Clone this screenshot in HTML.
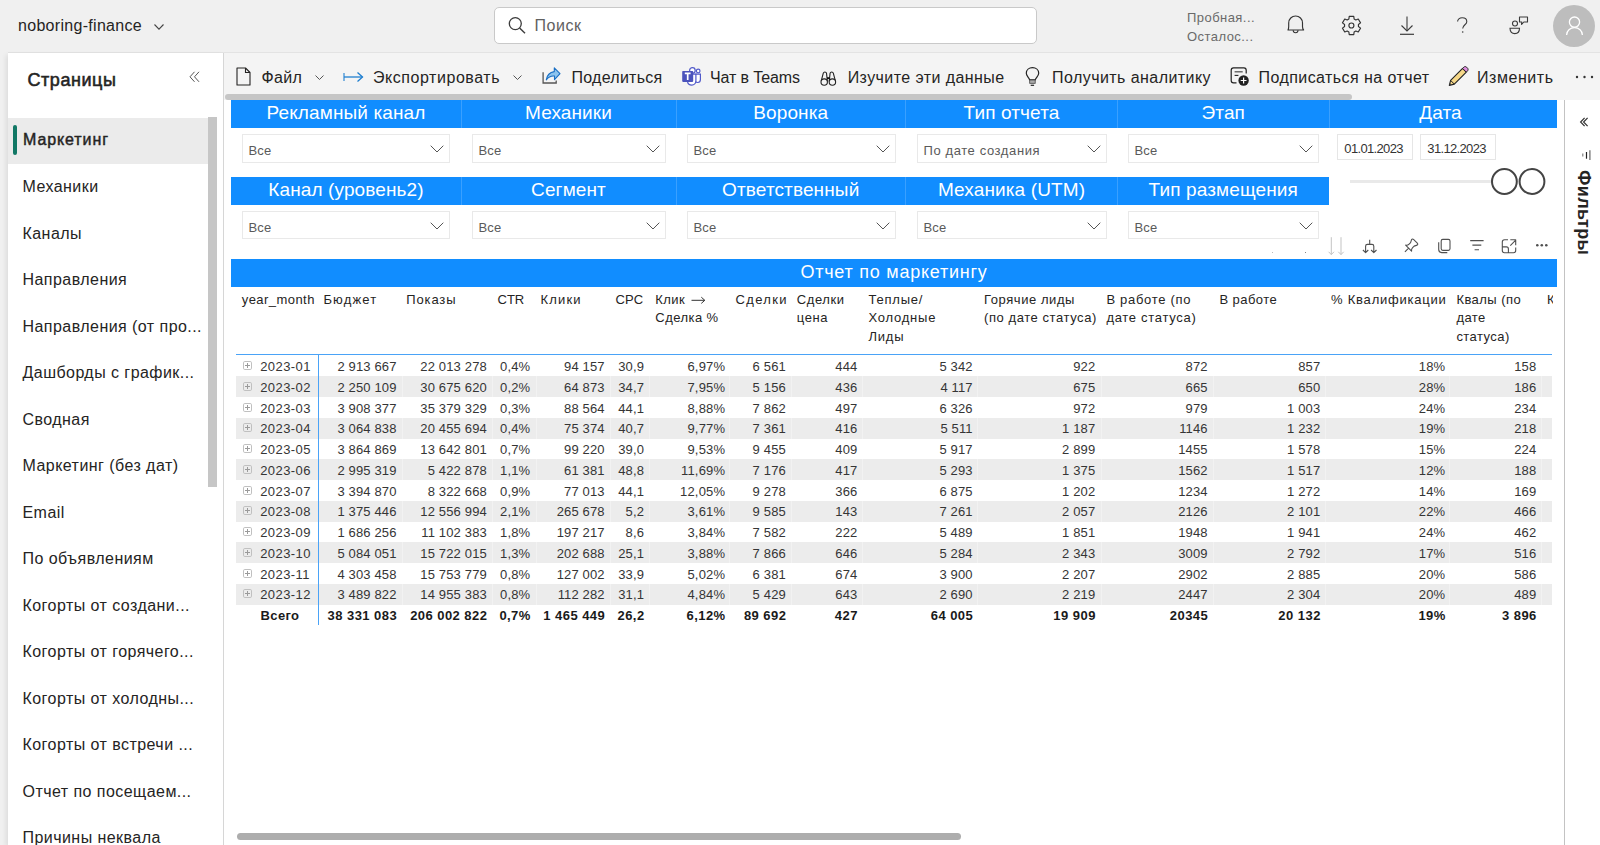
<!DOCTYPE html>
<html><head><meta charset="utf-8">
<style>
*{box-sizing:border-box;margin:0;padding:0}
html,body{width:1600px;height:845px;overflow:hidden;background:#f0f0f0;font-family:"Liberation Sans",sans-serif;color:#252423}
.a{position:absolute;white-space:nowrap}
svg.a{overflow:visible}
</style></head><body>
<div class="a" style="left:0.00px;top:0.00px;width:1600.00px;height:53.00px;background:#f0f0f0"></div><div class="a" style="left:8.00px;top:52.00px;width:1592.00px;height:1.20px;background:#e3e3e3"></div><div class="a" style="left:8.00px;top:53.30px;width:215.00px;height:792.00px;background:#fff;box-shadow:-2px 2px 5px rgba(0,0,0,.085)"></div><div class="a" style="left:223.00px;top:53.00px;width:1.00px;height:792.00px;background:#d6d6d6"></div><div class="a" style="left:224.00px;top:53.00px;width:1376.00px;height:47.00px;background:#f4f4f4"></div><div class="a" style="left:224.00px;top:100.00px;width:1340.00px;height:745.00px;background:#fff"></div><div class="a" style="left:1564.00px;top:100.00px;width:36.00px;height:745.00px;background:#fff"></div><div class="a" style="left:1564.00px;top:100.00px;width:1.00px;height:745.00px;background:#c3c3c3"></div><div class="a" style="left:18.00px;top:18.46px;font-size:16px;line-height:16px;color:#252423;font-weight:400;letter-spacing:0.3px;">noboring-finance</div><svg class="a" style="left:154.00px;top:24.00px;" width="10" height="6" viewBox="0 0 10 6" fill="none"><path d="M0.5 0.5 L5 5.2 L9.5 0.5" stroke="#444" stroke-width="1.1"/></svg><div class="a" style="left:494.00px;top:7.00px;width:543.00px;height:37.00px;background:#fff;border:1px solid #c9c9c9;border-radius:5px"></div><svg class="a" style="left:508.00px;top:16.00px;" width="18" height="18" viewBox="0 0 18 18" fill="none"><circle cx="7.3" cy="7.6" r="6" stroke="#3b3b3b" stroke-width="1.3"/><path d="M11.6 12 L17 17.3" stroke="#3b3b3b" stroke-width="1.4"/></svg><div class="a" style="left:534.40px;top:18.36px;font-size:16px;line-height:16px;color:#616161;font-weight:400;letter-spacing:0.55px;">Поиск</div><div class="a" style="left:1187.00px;top:10.90px;font-size:13px;line-height:13px;color:#6a6a6a;font-weight:400;letter-spacing:0.45px;">Пробная...</div><div class="a" style="left:1187.00px;top:29.60px;font-size:13px;line-height:13px;color:#6a6a6a;font-weight:400;letter-spacing:0.45px;">Осталос...</div><svg class="a" style="left:1280.00px;top:10.00px;" width="90" height="32" viewBox="0 0 90 32" fill="none"><path d="M8 20 H23.6 C22.7 19 22.5 18 22.5 16.5 V12.9 A6.9 6.9 0 0 0 8.7 12.9 V16.5 C8.7 18 8.5 19 8 20 Z" stroke="#333" stroke-width="1.15" stroke-linejoin="round"/><path d="M13.2 20.3 A2.4 2.4 0 0 0 18 20.3" stroke="#333" stroke-width="1.1"/><path d="M68.88 9.01 L69.23 6.38 L73.77 6.38 L74.12 9.01 L75.81 9.98 L78.26 8.97 L80.54 12.91 L78.43 14.53 L78.43 16.47 L80.54 18.09 L78.26 22.03 L75.81 21.02 L74.12 21.99 L73.77 24.62 L69.23 24.62 L68.88 21.99 L67.19 21.02 L64.74 22.03 L62.46 18.09 L64.57 16.47 L64.57 14.53 L62.46 12.91 L64.74 8.97 L67.19 9.98 Z" stroke="#333" stroke-width="1.15" stroke-linejoin="round"/><circle cx="71.4" cy="15.5" r="2.5" stroke="#333" stroke-width="1.15"/></svg><svg class="a" style="left:1399.00px;top:16.00px;" width="16" height="19" viewBox="0 0 16 19" fill="none"><path d="M8 0.5 V15" stroke="#3b3b3b" stroke-width="1.1"/><path d="M2.5 9.5 L8 15 L13.5 9.5" stroke="#3b3b3b" stroke-width="1.1"/><path d="M1 18.3 H15" stroke="#3b3b3b" stroke-width="1.2"/></svg><svg class="a" style="left:1456.00px;top:17.00px;" width="13" height="17" viewBox="0 0 13 17" fill="none"><path d="M1.6 4.6 C1.6 2.3 3.5 0.8 6.2 0.8 C8.9 0.8 10.8 2.4 10.8 4.7 C10.8 7.6 6.7 8 6.7 11.5" stroke="#3b3b3b" stroke-width="1.1" fill="none"/><circle cx="6.7" cy="15" r="0.8" fill="#3b3b3b"/></svg><svg class="a" style="left:1509.00px;top:16.00px;" width="20" height="19" viewBox="0 0 20 19" fill="none"><circle cx="6" cy="7.5" r="2.5" stroke="#3b3b3b" stroke-width="1.1"/><path d="M1 12.3 H10.5 C10.5 16 8.6 17.6 5.8 17.6 C3 17.6 1 16 1 12.3 Z" stroke="#3b3b3b" stroke-width="1.1"/><path d="M10.5 1 H18.5 V6 H14.8 L12.6 8.5 L12.8 6 H10.5 Z" stroke="#3b3b3b" stroke-width="1.1" stroke-linejoin="round"/></svg><div class="a" style="left:1553.20px;top:4.50px;width:42.00px;height:42.00px;background:#bdbdbd;border-radius:50%"></div><svg class="a" style="left:1561.00px;top:14.00px;" width="26" height="22" viewBox="0 0 26 22" fill="none"><circle cx="13.5" cy="8.1" r="5.1" stroke="#fff" stroke-width="1.3"/><path d="M5.6 21 C5.6 16.6 9.2 13.6 13.5 13.6 C17.8 13.6 21.4 16.6 21.4 21" stroke="#fff" stroke-width="1.3"/></svg><div class="a" style="left:27.50px;top:71.46px;font-size:18px;line-height:18px;color:#252423;font-weight:400;letter-spacing:0.55px;-webkit-text-stroke:0.55px #252423">Страницы</div><svg class="a" style="left:189.00px;top:71.00px;" width="11" height="12" viewBox="0 0 11 12" fill="none"><path d="M5.5 0.8 L1 5.8 L5.5 10.8 M10 0.8 L5.5 5.8 L10 10.8" stroke="#555" stroke-width="1"/></svg><div class="a" style="left:8.00px;top:117.50px;width:200.00px;height:46.20px;background:#ebebeb"></div><div class="a" style="left:12.80px;top:124.60px;width:4.40px;height:30.00px;background:#117865;border-radius:2.2px"></div><div class="a" style="left:208.00px;top:117.00px;width:9.00px;height:370.00px;background:#c6c6c6"></div><div class="a" style="left:23.00px;top:132.26px;font-size:16px;line-height:16px;color:#252423;font-weight:400;letter-spacing:0.9px;-webkit-text-stroke:0.45px #252423">Маркетинг</div><div class="a" style="left:22.50px;top:179.06px;font-size:16px;line-height:16px;color:#252423;font-weight:400;letter-spacing:0.45px;">Механики</div><div class="a" style="left:22.50px;top:225.56px;font-size:16px;line-height:16px;color:#252423;font-weight:400;letter-spacing:0.45px;">Каналы</div><div class="a" style="left:22.50px;top:272.06px;font-size:16px;line-height:16px;color:#252423;font-weight:400;letter-spacing:0.45px;">Направления</div><div class="a" style="left:22.50px;top:318.56px;font-size:16px;line-height:16px;color:#252423;font-weight:400;letter-spacing:0.45px;">Направления (от про...</div><div class="a" style="left:22.50px;top:365.06px;font-size:16px;line-height:16px;color:#252423;font-weight:400;letter-spacing:0.45px;">Дашборды с график...</div><div class="a" style="left:22.50px;top:411.56px;font-size:16px;line-height:16px;color:#252423;font-weight:400;letter-spacing:0.45px;">Сводная</div><div class="a" style="left:22.50px;top:458.06px;font-size:16px;line-height:16px;color:#252423;font-weight:400;letter-spacing:0.45px;">Маркетинг (без дат)</div><div class="a" style="left:22.50px;top:504.56px;font-size:16px;line-height:16px;color:#252423;font-weight:400;letter-spacing:0.45px;">Email</div><div class="a" style="left:22.50px;top:551.06px;font-size:16px;line-height:16px;color:#252423;font-weight:400;letter-spacing:0.45px;">По объявлениям</div><div class="a" style="left:22.50px;top:597.56px;font-size:16px;line-height:16px;color:#252423;font-weight:400;letter-spacing:0.45px;">Когорты от создани...</div><div class="a" style="left:22.50px;top:644.06px;font-size:16px;line-height:16px;color:#252423;font-weight:400;letter-spacing:0.45px;">Когорты от горячего...</div><div class="a" style="left:22.50px;top:690.56px;font-size:16px;line-height:16px;color:#252423;font-weight:400;letter-spacing:0.45px;">Когорты от холодны...</div><div class="a" style="left:22.50px;top:737.06px;font-size:16px;line-height:16px;color:#252423;font-weight:400;letter-spacing:0.45px;">Когорты от встречи ...</div><div class="a" style="left:22.50px;top:783.56px;font-size:16px;line-height:16px;color:#252423;font-weight:400;letter-spacing:0.45px;">Отчет по посещаем...</div><div class="a" style="left:22.50px;top:830.06px;font-size:16px;line-height:16px;color:#252423;font-weight:400;letter-spacing:0.45px;">Причины неквала</div><svg class="a" style="left:236.00px;top:67.00px;" width="15" height="19" viewBox="0 0 15 19" fill="none"><path d="M1 1 H9.5 L14 5.5 V18 H1 Z" stroke="#252423" stroke-width="1.1" stroke-linejoin="round"/><path d="M9.5 1 V5.5 H14" stroke="#252423" stroke-width="1.1"/></svg><div class="a" style="left:261.50px;top:69.56px;font-size:16px;line-height:16px;color:#252423;font-weight:400;letter-spacing:0.3px;">Файл</div><svg class="a" style="left:314.50px;top:74.50px;" width="9" height="5" viewBox="0 0 9 5" fill="none"><path d="M0.5 0.5 L4.5 4.5 L8.5 0.5" stroke="#555" stroke-width="1"/></svg><svg class="a" style="left:343.00px;top:71.00px;" width="21" height="12" viewBox="0 0 21 12" fill="none"><path d="M1 2 V10" stroke="#1f7fd0" stroke-width="1.1"/><path d="M1 6 H19.5" stroke="#1f7fd0" stroke-width="1.3"/><path d="M14.5 1.5 L19.5 6 L14.5 10.5" stroke="#1f7fd0" stroke-width="1.3"/></svg><div class="a" style="left:373.00px;top:69.56px;font-size:16px;line-height:16px;color:#252423;font-weight:400;letter-spacing:0.55px;">Экспортировать</div><svg class="a" style="left:513.00px;top:74.50px;" width="9" height="5" viewBox="0 0 9 5" fill="none"><path d="M0.5 0.5 L4.5 4.5 L8.5 0.5" stroke="#555" stroke-width="1"/></svg><svg class="a" style="left:536.00px;top:62.00px;" width="30" height="30" viewBox="0 0 30 30" fill="none"><path d="M7.1 10.3 V21 H20.2 V18.5" stroke="#555" stroke-width="1.3"/><path d="M10.3 17.8 C11 13 14 10.2 18.3 9.6 V5.9 L24 11.7 L18.5 17.6 V14 C15 13.6 12.4 15 10.3 17.8 Z" fill="#8cc4ef" stroke="#1a6fc4" stroke-width="1.1" stroke-linejoin="round"/></svg><div class="a" style="left:571.50px;top:69.56px;font-size:16px;line-height:16px;color:#252423;font-weight:400;letter-spacing:0.26px;">Поделиться</div><svg class="a" style="left:676.00px;top:62.00px;" width="30" height="30" viewBox="0 0 30 30" fill="none"><path d="M19.6 12.2 H24.4 V17.6 C24.4 19.3 23.3 20.5 21.8 20.5 C20.6 20.5 19.8 19.9 19.5 19.3" stroke="#5059c9" stroke-width="1.2" fill="#fff"/><circle cx="22.2" cy="9" r="1.8" stroke="#5059c9" stroke-width="1.2" fill="#fff"/><path d="M12 12.2 H19.9 V18.6 C19.9 21.3 18 23.2 15.8 23.2 C13.6 23.2 11.9 21.7 11.6 19.9" stroke="#5059c9" stroke-width="1.2" fill="#fff"/><circle cx="16.4" cy="8.4" r="2.8" stroke="#5059c9" stroke-width="1.2" fill="#fff"/><rect x="6.2" y="8.9" width="11" height="11" rx="0.8" fill="#4b53bc"/><path d="M8.8 11.4 H14.6 M11.7 11.4 V17.9" stroke="#fff" stroke-width="1.7"/></svg><div class="a" style="left:710.00px;top:69.56px;font-size:16px;line-height:16px;color:#252423;font-weight:400;letter-spacing:-0.1px;">Чат в Teams</div><svg class="a" style="left:815.00px;top:62.00px;" width="30" height="30" viewBox="0 0 30 30" fill="none"><path d="M6.3 18.6 L8.3 11.2 C8.8 9.6 11 9.6 11.5 11.2 L12.4 19.6" stroke="#222" stroke-width="1.1" fill="none"/><circle cx="9.2" cy="20.1" r="3.2" stroke="#222" stroke-width="1.1" fill="#f4f4f4"/><path d="M20.3 18.6 L18.3 11.2 C17.8 9.6 15.6 9.6 15.1 11.2 L14.2 19.6" stroke="#222" stroke-width="1.1" fill="none"/><circle cx="17.4" cy="20.1" r="3.2" stroke="#222" stroke-width="1.1" fill="#f4f4f4"/><rect x="12" y="15.2" width="2.6" height="1.8" fill="#111"/></svg><div class="a" style="left:847.70px;top:69.56px;font-size:16px;line-height:16px;color:#252423;font-weight:400;letter-spacing:0.42px;">Изучите эти данные</div><svg class="a" style="left:1020.00px;top:62.00px;" width="30" height="30" viewBox="0 0 30 30" fill="none"><path d="M9.6 17.9 C9.3 16 6.3 14 6.3 11.3 C6.3 7.8 9.1 5.7 12.5 5.7 C15.9 5.7 18.7 7.8 18.7 11.3 C18.7 14 15.7 16 15.3 17.9 Z" stroke="#222" stroke-width="1.2" stroke-linejoin="round"/><rect x="9.7" y="18" width="5.5" height="3.3" fill="#aaa" stroke="#444" stroke-width=".8"/><path d="M10.7 23.3 H14.1" stroke="#222" stroke-width="1.2"/></svg><div class="a" style="left:1052.00px;top:69.56px;font-size:16px;line-height:16px;color:#252423;font-weight:400;letter-spacing:0.44px;">Получить аналитику</div><svg class="a" style="left:1225.00px;top:62.00px;" width="30" height="30" viewBox="0 0 30 30" fill="none"><path d="M11.5 20.9 H8.5 C7.2 20.9 6.2 19.9 6.2 18.6 V8.2 C6.2 6.9 7.2 5.9 8.5 5.9 H18.9 C20.2 5.9 21.2 6.9 21.2 8.2 V11.6" stroke="#222" stroke-width="1.2"/><path d="M9.6 9.8 H17.7" stroke="#555" stroke-width="1.3"/><path d="M9.6 13.4 H13.4" stroke="#222" stroke-width="1.1"/><circle cx="18.6" cy="18.5" r="5.2" fill="#222"/><path d="M18.6 15.6 V21.4 M15.7 18.5 H21.5" stroke="#fff" stroke-width="1.2"/></svg><div class="a" style="left:1258.50px;top:69.56px;font-size:16px;line-height:16px;color:#252423;font-weight:400;letter-spacing:0.43px;">Подписаться на отчет</div><svg class="a" style="left:1444.00px;top:62.00px;" width="30" height="30" viewBox="0 0 30 30" fill="none"><path d="M5.3 23.4 L6.6 18.4 L18.6 6.4 L22.3 10.1 L10.3 22.1 Z" fill="#f6d889" stroke="#222" stroke-width="1.1" stroke-linejoin="round"/><path d="M18.6 6.4 L19.8 5.2 C20.6 4.4 21.8 4.4 22.6 5.2 L23.5 6.1 C24.3 6.9 24.3 8.1 23.5 8.9 L22.3 10.1 Z" fill="#df8ee0" stroke="#222" stroke-width="1"/><path d="M6.6 18.4 L10.3 22.1" stroke="#222" stroke-width="1"/><path d="M5.3 23.4 L5.9 21 L7.7 22.8 Z" fill="#444"/></svg><div class="a" style="left:1477.00px;top:69.56px;font-size:16px;line-height:16px;color:#252423;font-weight:400;letter-spacing:0.55px;">Изменить</div><svg class="a" style="left:1575.00px;top:75.00px;" width="19" height="4" viewBox="0 0 19 4" fill="none"><circle cx="2" cy="2" r="1.2" fill="#333"/><circle cx="9.5" cy="2" r="1.2" fill="#333"/><circle cx="17" cy="2" r="1.2" fill="#333"/></svg><div class="a" style="left:225.00px;top:94.00px;width:1127.00px;height:6.00px;background:#c6c6c6;border-radius:3px"></div><div class="a" style="left:231.00px;top:100.00px;width:1326.00px;height:28.00px;background:#118dff"></div><div class="a" style="left:460.50px;top:100.00px;width:1.00px;height:28.00px;background:#3aa0ff"></div><div class="a" style="left:675.50px;top:100.00px;width:1.00px;height:28.00px;background:#3aa0ff"></div><div class="a" style="left:905.00px;top:100.00px;width:1.00px;height:28.00px;background:#3aa0ff"></div><div class="a" style="left:1117.00px;top:100.00px;width:1.00px;height:28.00px;background:#3aa0ff"></div><div class="a" style="left:1328.50px;top:100.00px;width:1.00px;height:28.00px;background:#3aa0ff"></div><div class="a" style="left:231px;top:100px;width:230px;height:28px;line-height:25px;text-align:center;color:#fff;font-size:19px;letter-spacing:0.12px">Рекламный канал</div><div class="a" style="left:461px;top:100px;width:215px;height:28px;line-height:25px;text-align:center;color:#fff;font-size:19px;letter-spacing:0.12px">Механики</div><div class="a" style="left:676px;top:100px;width:229.5px;height:28px;line-height:25px;text-align:center;color:#fff;font-size:19px;letter-spacing:0.12px">Воронка</div><div class="a" style="left:905.5px;top:100px;width:212.0px;height:28px;line-height:25px;text-align:center;color:#fff;font-size:19px;letter-spacing:0.12px">Тип отчета</div><div class="a" style="left:1117.5px;top:100px;width:211.5px;height:28px;line-height:25px;text-align:center;color:#fff;font-size:19px;letter-spacing:0.12px">Этап</div><div class="a" style="left:1326.5px;top:100px;width:228px;height:28px;line-height:25px;text-align:center;color:#fff;font-size:19px;letter-spacing:0.12px">Дата</div><div class="a" style="left:242.00px;top:134.00px;width:208.00px;height:28.50px;background:#fff;border:1px solid #e9e9e9"></div><div class="a" style="left:248.50px;top:144.30px;font-size:13px;line-height:13px;color:#5a5a5a;font-weight:400;letter-spacing:0.15px;">Все</div><svg class="a" style="left:430.00px;top:145.00px;" width="14" height="8" viewBox="0 0 14 8" fill="none"><path d="M0.7 0.7 L7 7 L13.3 0.7" stroke="#555" stroke-width="1"/></svg><div class="a" style="left:472.00px;top:134.00px;width:194.00px;height:28.50px;background:#fff;border:1px solid #e9e9e9"></div><div class="a" style="left:478.50px;top:144.30px;font-size:13px;line-height:13px;color:#5a5a5a;font-weight:400;letter-spacing:0.15px;">Все</div><svg class="a" style="left:646.00px;top:145.00px;" width="14" height="8" viewBox="0 0 14 8" fill="none"><path d="M0.7 0.7 L7 7 L13.3 0.7" stroke="#555" stroke-width="1"/></svg><div class="a" style="left:687.00px;top:134.00px;width:209.00px;height:28.50px;background:#fff;border:1px solid #e9e9e9"></div><div class="a" style="left:693.50px;top:144.30px;font-size:13px;line-height:13px;color:#5a5a5a;font-weight:400;letter-spacing:0.15px;">Все</div><svg class="a" style="left:876.00px;top:145.00px;" width="14" height="8" viewBox="0 0 14 8" fill="none"><path d="M0.7 0.7 L7 7 L13.3 0.7" stroke="#555" stroke-width="1"/></svg><div class="a" style="left:917.00px;top:134.00px;width:190.00px;height:28.50px;background:#fff;border:1px solid #e9e9e9"></div><div class="a" style="left:923.50px;top:144.30px;font-size:13px;line-height:13px;color:#5a5a5a;font-weight:400;letter-spacing:0.6px;">По дате создания</div><svg class="a" style="left:1087.00px;top:145.00px;" width="14" height="8" viewBox="0 0 14 8" fill="none"><path d="M0.7 0.7 L7 7 L13.3 0.7" stroke="#555" stroke-width="1"/></svg><div class="a" style="left:1128.00px;top:134.00px;width:190.50px;height:28.50px;background:#fff;border:1px solid #e9e9e9"></div><div class="a" style="left:1134.50px;top:144.30px;font-size:13px;line-height:13px;color:#5a5a5a;font-weight:400;letter-spacing:0.15px;">Все</div><svg class="a" style="left:1298.50px;top:145.00px;" width="14" height="8" viewBox="0 0 14 8" fill="none"><path d="M0.7 0.7 L7 7 L13.3 0.7" stroke="#555" stroke-width="1"/></svg><div class="a" style="left:231.00px;top:177.00px;width:1098.00px;height:28.00px;background:#118dff"></div><div class="a" style="left:460.50px;top:177.00px;width:1.00px;height:28.00px;background:#3aa0ff"></div><div class="a" style="left:675.50px;top:177.00px;width:1.00px;height:28.00px;background:#3aa0ff"></div><div class="a" style="left:905.00px;top:177.00px;width:1.00px;height:28.00px;background:#3aa0ff"></div><div class="a" style="left:1117.00px;top:177.00px;width:1.00px;height:28.00px;background:#3aa0ff"></div><div class="a" style="left:231px;top:177px;width:230px;height:28px;line-height:25px;text-align:center;color:#fff;font-size:19px;letter-spacing:0.12px">Канал (уровень2)</div><div class="a" style="left:461px;top:177px;width:215px;height:28px;line-height:25px;text-align:center;color:#fff;font-size:19px;letter-spacing:0.12px">Сегмент</div><div class="a" style="left:676px;top:177px;width:229.5px;height:28px;line-height:25px;text-align:center;color:#fff;font-size:19px;letter-spacing:0.12px">Ответственный</div><div class="a" style="left:905.5px;top:177px;width:212.0px;height:28px;line-height:25px;text-align:center;color:#fff;font-size:19px;letter-spacing:0.12px">Механика (UTM)</div><div class="a" style="left:1117.5px;top:177px;width:211.5px;height:28px;line-height:25px;text-align:center;color:#fff;font-size:19px;letter-spacing:0.12px">Тип размещения</div><div class="a" style="left:242.00px;top:210.60px;width:208.00px;height:28.50px;background:#fff;border:1px solid #e9e9e9"></div><div class="a" style="left:248.50px;top:220.90px;font-size:13px;line-height:13px;color:#5a5a5a;font-weight:400;letter-spacing:0.15px;">Все</div><svg class="a" style="left:430.00px;top:221.60px;" width="14" height="8" viewBox="0 0 14 8" fill="none"><path d="M0.7 0.7 L7 7 L13.3 0.7" stroke="#555" stroke-width="1"/></svg><div class="a" style="left:472.00px;top:210.60px;width:194.00px;height:28.50px;background:#fff;border:1px solid #e9e9e9"></div><div class="a" style="left:478.50px;top:220.90px;font-size:13px;line-height:13px;color:#5a5a5a;font-weight:400;letter-spacing:0.15px;">Все</div><svg class="a" style="left:646.00px;top:221.60px;" width="14" height="8" viewBox="0 0 14 8" fill="none"><path d="M0.7 0.7 L7 7 L13.3 0.7" stroke="#555" stroke-width="1"/></svg><div class="a" style="left:687.00px;top:210.60px;width:209.00px;height:28.50px;background:#fff;border:1px solid #e9e9e9"></div><div class="a" style="left:693.50px;top:220.90px;font-size:13px;line-height:13px;color:#5a5a5a;font-weight:400;letter-spacing:0.15px;">Все</div><svg class="a" style="left:876.00px;top:221.60px;" width="14" height="8" viewBox="0 0 14 8" fill="none"><path d="M0.7 0.7 L7 7 L13.3 0.7" stroke="#555" stroke-width="1"/></svg><div class="a" style="left:917.00px;top:210.60px;width:190.00px;height:28.50px;background:#fff;border:1px solid #e9e9e9"></div><div class="a" style="left:923.50px;top:220.90px;font-size:13px;line-height:13px;color:#5a5a5a;font-weight:400;letter-spacing:0.15px;">Все</div><svg class="a" style="left:1087.00px;top:221.60px;" width="14" height="8" viewBox="0 0 14 8" fill="none"><path d="M0.7 0.7 L7 7 L13.3 0.7" stroke="#555" stroke-width="1"/></svg><div class="a" style="left:1128.00px;top:210.60px;width:190.50px;height:28.50px;background:#fff;border:1px solid #e9e9e9"></div><div class="a" style="left:1134.50px;top:220.90px;font-size:13px;line-height:13px;color:#5a5a5a;font-weight:400;letter-spacing:0.15px;">Все</div><svg class="a" style="left:1298.50px;top:221.60px;" width="14" height="8" viewBox="0 0 14 8" fill="none"><path d="M0.7 0.7 L7 7 L13.3 0.7" stroke="#555" stroke-width="1"/></svg><div class="a" style="left:1337.20px;top:134.20px;width:76.00px;height:26.30px;background:#fff;border:1px solid #e6e6e6"></div><div class="a" style="left:1420.00px;top:134.20px;width:76.30px;height:26.30px;background:#fff;border:1px solid #e6e6e6"></div><div class="a" style="left:1344.30px;top:141.50px;font-size:13px;line-height:13px;color:#333;font-weight:400;letter-spacing:-0.65px;">01.01.2023</div><div class="a" style="left:1427.30px;top:141.50px;font-size:13px;line-height:13px;color:#333;font-weight:400;letter-spacing:-0.65px;">31.12.2023</div><div class="a" style="left:1350.00px;top:180.00px;width:155.00px;height:3.00px;background:#e9e9e9"></div><svg class="a" style="left:1490.00px;top:167.00px;" width="57" height="29" viewBox="0 0 57 29" fill="none"><circle cx="14.4" cy="14.5" r="12.4" stroke="#444" stroke-width="2" fill="#fff"/><circle cx="42" cy="14.5" r="12.4" stroke="#444" stroke-width="2" fill="#fff"/></svg><svg class="a" style="left:1320.00px;top:230.00px;" width="240" height="30" viewBox="0 0 240 30" fill="none"><g stroke="#c3c3c3" stroke-width="1" fill="none"><path d="M11.3 7.2 V24.6 M8.6 21.8 L11.3 24.6 L14 21.8"/><path d="M21 7.2 V24.6 M18.3 21.8 L21 24.6 L23.7 21.8"/></g><g stroke="#505050" stroke-width="1.1" fill="none" stroke-linejoin="round"><path d="M49.7 9.8 V14.4 M45.6 22.4 V16.2 Q45.6 14.4 47.4 14.4 H52 Q53.8 14.4 53.8 16.2 V22.4 M42.9 20 L45.6 22.6 L48.3 20 M51.1 20 L53.8 22.6 L56.5 20"/><g transform="translate(88.6 18.1) rotate(45)"><path d="M-4.2 0 H4.2 Q2.5 -1.2 2.5 -3.2 V-5.3 L3.9 -8.1 Q4.1 -9.6 2.7 -9.6 H-2.7 Q-4.1 -9.6 -3.9 -8.1 L-2.5 -5.3 V-3.2 Q-2.5 -1.2 -4.2 0 Z M0 0 V5.2"/></g><rect x="121.2" y="9.4" width="8.8" height="11" rx="1.6"/><path d="M118.7 12.2 V19.6 Q118.7 22.6 121.7 22.6 H127.3"/><path d="M150.2 10.6 H163.6 M152.4 15.1 H161.3 M154.6 19.7 H159"/><path d="M188 9.8 H184.5 Q182.3 9.8 182.3 12 V20.6 Q182.3 22.8 184.5 22.8 H193.5 Q195.7 22.8 195.7 20.6 V17.4 M182.3 16.9 H186.4 Q188.4 16.9 188.4 18.9 V22.8 M190.3 15.6 L195.7 10.2 M190.3 9.8 H195.7 V15.2"/></g><circle cx="217.3" cy="15.3" r="1.3" fill="#505050"/><circle cx="221.8" cy="15.3" r="1.3" fill="#505050"/><circle cx="226.3" cy="15.3" r="1.3" fill="#505050"/></svg><div class="a" style="left:1271.50px;top:251.50px;width:1.20px;height:1.20px;background:#bbb"></div><div class="a" style="left:1304.50px;top:251.50px;width:1.50px;height:1.50px;background:#888"></div><div class="a" style="left:231.00px;top:259.30px;width:1326.00px;height:27.70px;background:#118dff"></div><div class="a" style="left:231px;top:259.3px;width:1326px;height:27.7px;line-height:26px;text-align:center;color:#fff;font-size:18px;letter-spacing:0.75px">Отчет по маркетингу</div><div class="a" style="left:241.70px;top:292.75px;font-size:13px;line-height:13px;color:#252423;font-weight:400;letter-spacing:0.45px;">year_month</div><div class="a" style="left:323.40px;top:292.75px;font-size:13px;line-height:13px;color:#252423;font-weight:400;letter-spacing:1.15px;">Бюджет</div><div class="a" style="left:406.30px;top:292.75px;font-size:13px;line-height:13px;color:#252423;font-weight:400;letter-spacing:0.85px;">Показы</div><div class="a" style="left:497.50px;top:292.75px;font-size:13px;line-height:13px;color:#252423;font-weight:400;letter-spacing:0px;">CTR</div><div class="a" style="left:540.40px;top:292.75px;font-size:13px;line-height:13px;color:#252423;font-weight:400;letter-spacing:1.2px;">Клики</div><div class="a" style="left:615.60px;top:292.75px;font-size:13px;line-height:13px;color:#252423;font-weight:400;letter-spacing:0px;">CPC</div><div class="a" style="left:655.30px;top:292.75px;font-size:13px;line-height:13px;color:#252423;font-weight:400;letter-spacing:0.45px;">Клик</div><div class="a" style="left:655.30px;top:311.30px;font-size:13px;line-height:13px;color:#252423;font-weight:400;letter-spacing:0.45px;">Сделка %</div><div class="a" style="left:735.60px;top:292.75px;font-size:13px;line-height:13px;color:#252423;font-weight:400;letter-spacing:1.3px;">Сделки</div><div class="a" style="left:796.80px;top:292.75px;font-size:13px;line-height:13px;color:#252423;font-weight:400;letter-spacing:0.6px;">Сделки</div><div class="a" style="left:796.80px;top:311.30px;font-size:13px;line-height:13px;color:#252423;font-weight:400;letter-spacing:0.6px;">цена</div><div class="a" style="left:868.40px;top:292.75px;font-size:13px;line-height:13px;color:#252423;font-weight:400;letter-spacing:0.8px;">Теплые/</div><div class="a" style="left:868.40px;top:311.30px;font-size:13px;line-height:13px;color:#252423;font-weight:400;letter-spacing:0.8px;">Холодные</div><div class="a" style="left:868.40px;top:329.70px;font-size:13px;line-height:13px;color:#252423;font-weight:400;letter-spacing:0.8px;">Лиды</div><div class="a" style="left:984.00px;top:292.75px;font-size:13px;line-height:13px;color:#252423;font-weight:400;letter-spacing:0.57px;">Горячие лиды</div><div class="a" style="left:984.00px;top:311.30px;font-size:13px;line-height:13px;color:#252423;font-weight:400;letter-spacing:0.57px;">(по дате статуса)</div><div class="a" style="left:1106.40px;top:292.75px;font-size:13px;line-height:13px;color:#252423;font-weight:400;letter-spacing:0.7px;">В работе (по</div><div class="a" style="left:1106.40px;top:311.30px;font-size:13px;line-height:13px;color:#252423;font-weight:400;letter-spacing:0.7px;">дате статуса)</div><div class="a" style="left:1219.40px;top:292.75px;font-size:13px;line-height:13px;color:#252423;font-weight:400;letter-spacing:0.45px;">В работе</div><div class="a" style="left:1331.00px;top:292.75px;font-size:13px;line-height:13px;color:#252423;font-weight:400;letter-spacing:0.78px;">% Квалификации</div><div class="a" style="left:1456.40px;top:292.75px;font-size:13px;line-height:13px;color:#252423;font-weight:400;letter-spacing:0.45px;">Квалы (по</div><div class="a" style="left:1456.40px;top:311.30px;font-size:13px;line-height:13px;color:#252423;font-weight:400;letter-spacing:0.45px;">дате</div><div class="a" style="left:1456.40px;top:329.70px;font-size:13px;line-height:13px;color:#252423;font-weight:400;letter-spacing:0.45px;">статуса)</div><div class="a" style="left:1541px;top:290px;width:12px;height:20px;overflow:hidden"><div class="a" style="left:6px;top:2.75px;font-size:13px;line-height:13px;color:#252423">К</div></div><div class="a" style="left:236.00px;top:354.00px;width:1316.00px;height:1.00px;background:#4aa3f7"></div><svg class="a" style="left:691.00px;top:296.00px;" width="15" height="8" viewBox="0 0 15 8" fill="none"><path d="M0.5 4.3 H13.6 M10.3 1.2 L13.8 4.3 L10.3 7.4" stroke="#333" stroke-width="1"/></svg><svg class="a" style="left:243.00px;top:361.00px;" width="9" height="9" viewBox="0 0 9 9" fill="none"><rect x="0.5" y="0.5" width="8" height="8" rx="1.3" stroke="#c0c0c0" stroke-width="1" fill="none"/><rect x="2" y="4" width="5" height="1" fill="#9a9a9a"/><rect x="4" y="2" width="1" height="5" fill="#9a9a9a"/></svg><div class="a" style="left:260.20px;top:360.20px;font-size:13px;line-height:13px;color:#353535;font-weight:400;letter-spacing:0.42px;">2023-01</div><div class="a" style="right:1203.40px;top:360.20px;font-size:13px;line-height:13px;color:#353535;font-weight:400;letter-spacing:0.15px;text-align:right;">2 913 667</div><div class="a" style="right:1113.10px;top:360.20px;font-size:13px;line-height:13px;color:#353535;font-weight:400;letter-spacing:0.15px;text-align:right;">22 013 278</div><div class="a" style="right:1069.70px;top:360.20px;font-size:13px;line-height:13px;color:#353535;font-weight:400;letter-spacing:0.15px;text-align:right;">0,4%</div><div class="a" style="right:995.30px;top:360.20px;font-size:13px;line-height:13px;color:#353535;font-weight:400;letter-spacing:0.15px;text-align:right;">94 157</div><div class="a" style="right:955.90px;top:360.20px;font-size:13px;line-height:13px;color:#353535;font-weight:400;letter-spacing:0.15px;text-align:right;">30,9</div><div class="a" style="right:874.90px;top:360.20px;font-size:13px;line-height:13px;color:#353535;font-weight:400;letter-spacing:0.15px;text-align:right;">6,97%</div><div class="a" style="right:814.10px;top:360.20px;font-size:13px;line-height:13px;color:#353535;font-weight:400;letter-spacing:0.15px;text-align:right;">6 561</div><div class="a" style="right:742.60px;top:360.20px;font-size:13px;line-height:13px;color:#353535;font-weight:400;letter-spacing:0.15px;text-align:right;">444</div><div class="a" style="right:627.30px;top:360.20px;font-size:13px;line-height:13px;color:#353535;font-weight:400;letter-spacing:0.15px;text-align:right;">5 342</div><div class="a" style="right:504.70px;top:360.20px;font-size:13px;line-height:13px;color:#353535;font-weight:400;letter-spacing:0.15px;text-align:right;">922</div><div class="a" style="right:392.30px;top:360.20px;font-size:13px;line-height:13px;color:#353535;font-weight:400;letter-spacing:0.15px;text-align:right;">872</div><div class="a" style="right:279.70px;top:360.20px;font-size:13px;line-height:13px;color:#353535;font-weight:400;letter-spacing:0.15px;text-align:right;">857</div><div class="a" style="right:154.70px;top:360.20px;font-size:13px;line-height:13px;color:#353535;font-weight:400;letter-spacing:0.15px;text-align:right;">18%</div><div class="a" style="right:63.70px;top:360.20px;font-size:13px;line-height:13px;color:#353535;font-weight:400;letter-spacing:0.15px;text-align:right;">158</div><div class="a" style="left:236.00px;top:376.25px;width:1316.00px;height:20.75px;background:#ececec"></div><div class="a" style="left:402.00px;top:376.25px;width:1.00px;height:20.75px;background:#f2f2f2"></div><div class="a" style="left:492.00px;top:376.25px;width:1.00px;height:20.75px;background:#f2f2f2"></div><div class="a" style="left:536.00px;top:376.25px;width:1.00px;height:20.75px;background:#f2f2f2"></div><div class="a" style="left:610.00px;top:376.25px;width:1.00px;height:20.75px;background:#f2f2f2"></div><div class="a" style="left:649.00px;top:376.25px;width:1.00px;height:20.75px;background:#f2f2f2"></div><div class="a" style="left:728.50px;top:376.25px;width:1.00px;height:20.75px;background:#f2f2f2"></div><div class="a" style="left:790.50px;top:376.25px;width:1.00px;height:20.75px;background:#f2f2f2"></div><div class="a" style="left:862.00px;top:376.25px;width:1.00px;height:20.75px;background:#f2f2f2"></div><div class="a" style="left:977.00px;top:376.25px;width:1.00px;height:20.75px;background:#f2f2f2"></div><div class="a" style="left:1100.50px;top:376.25px;width:1.00px;height:20.75px;background:#f2f2f2"></div><div class="a" style="left:1212.50px;top:376.25px;width:1.00px;height:20.75px;background:#f2f2f2"></div><div class="a" style="left:1324.50px;top:376.25px;width:1.00px;height:20.75px;background:#f2f2f2"></div><div class="a" style="left:1448.50px;top:376.25px;width:1.00px;height:20.75px;background:#f2f2f2"></div><div class="a" style="left:1540.50px;top:376.25px;width:1.00px;height:20.75px;background:#f2f2f2"></div><svg class="a" style="left:243.00px;top:382.00px;" width="9" height="9" viewBox="0 0 9 9" fill="none"><rect x="0.5" y="0.5" width="8" height="8" rx="1.3" stroke="#c0c0c0" stroke-width="1" fill="none"/><rect x="2" y="4" width="5" height="1" fill="#9a9a9a"/><rect x="4" y="2" width="1" height="5" fill="#9a9a9a"/></svg><div class="a" style="left:260.20px;top:380.95px;font-size:13px;line-height:13px;color:#353535;font-weight:400;letter-spacing:0.42px;">2023-02</div><div class="a" style="right:1203.40px;top:380.95px;font-size:13px;line-height:13px;color:#353535;font-weight:400;letter-spacing:0.15px;text-align:right;">2 250 109</div><div class="a" style="right:1113.10px;top:380.95px;font-size:13px;line-height:13px;color:#353535;font-weight:400;letter-spacing:0.15px;text-align:right;">30 675 620</div><div class="a" style="right:1069.70px;top:380.95px;font-size:13px;line-height:13px;color:#353535;font-weight:400;letter-spacing:0.15px;text-align:right;">0,2%</div><div class="a" style="right:995.30px;top:380.95px;font-size:13px;line-height:13px;color:#353535;font-weight:400;letter-spacing:0.15px;text-align:right;">64 873</div><div class="a" style="right:955.90px;top:380.95px;font-size:13px;line-height:13px;color:#353535;font-weight:400;letter-spacing:0.15px;text-align:right;">34,7</div><div class="a" style="right:874.90px;top:380.95px;font-size:13px;line-height:13px;color:#353535;font-weight:400;letter-spacing:0.15px;text-align:right;">7,95%</div><div class="a" style="right:814.10px;top:380.95px;font-size:13px;line-height:13px;color:#353535;font-weight:400;letter-spacing:0.15px;text-align:right;">5 156</div><div class="a" style="right:742.60px;top:380.95px;font-size:13px;line-height:13px;color:#353535;font-weight:400;letter-spacing:0.15px;text-align:right;">436</div><div class="a" style="right:627.30px;top:380.95px;font-size:13px;line-height:13px;color:#353535;font-weight:400;letter-spacing:0.15px;text-align:right;">4 117</div><div class="a" style="right:504.70px;top:380.95px;font-size:13px;line-height:13px;color:#353535;font-weight:400;letter-spacing:0.15px;text-align:right;">675</div><div class="a" style="right:392.30px;top:380.95px;font-size:13px;line-height:13px;color:#353535;font-weight:400;letter-spacing:0.15px;text-align:right;">665</div><div class="a" style="right:279.70px;top:380.95px;font-size:13px;line-height:13px;color:#353535;font-weight:400;letter-spacing:0.15px;text-align:right;">650</div><div class="a" style="right:154.70px;top:380.95px;font-size:13px;line-height:13px;color:#353535;font-weight:400;letter-spacing:0.15px;text-align:right;">28%</div><div class="a" style="right:63.70px;top:380.95px;font-size:13px;line-height:13px;color:#353535;font-weight:400;letter-spacing:0.15px;text-align:right;">186</div><svg class="a" style="left:243.00px;top:403.00px;" width="9" height="9" viewBox="0 0 9 9" fill="none"><rect x="0.5" y="0.5" width="8" height="8" rx="1.3" stroke="#c0c0c0" stroke-width="1" fill="none"/><rect x="2" y="4" width="5" height="1" fill="#9a9a9a"/><rect x="4" y="2" width="1" height="5" fill="#9a9a9a"/></svg><div class="a" style="left:260.20px;top:401.70px;font-size:13px;line-height:13px;color:#353535;font-weight:400;letter-spacing:0.42px;">2023-03</div><div class="a" style="right:1203.40px;top:401.70px;font-size:13px;line-height:13px;color:#353535;font-weight:400;letter-spacing:0.15px;text-align:right;">3 908 377</div><div class="a" style="right:1113.10px;top:401.70px;font-size:13px;line-height:13px;color:#353535;font-weight:400;letter-spacing:0.15px;text-align:right;">35 379 329</div><div class="a" style="right:1069.70px;top:401.70px;font-size:13px;line-height:13px;color:#353535;font-weight:400;letter-spacing:0.15px;text-align:right;">0,3%</div><div class="a" style="right:995.30px;top:401.70px;font-size:13px;line-height:13px;color:#353535;font-weight:400;letter-spacing:0.15px;text-align:right;">88 564</div><div class="a" style="right:955.90px;top:401.70px;font-size:13px;line-height:13px;color:#353535;font-weight:400;letter-spacing:0.15px;text-align:right;">44,1</div><div class="a" style="right:874.90px;top:401.70px;font-size:13px;line-height:13px;color:#353535;font-weight:400;letter-spacing:0.15px;text-align:right;">8,88%</div><div class="a" style="right:814.10px;top:401.70px;font-size:13px;line-height:13px;color:#353535;font-weight:400;letter-spacing:0.15px;text-align:right;">7 862</div><div class="a" style="right:742.60px;top:401.70px;font-size:13px;line-height:13px;color:#353535;font-weight:400;letter-spacing:0.15px;text-align:right;">497</div><div class="a" style="right:627.30px;top:401.70px;font-size:13px;line-height:13px;color:#353535;font-weight:400;letter-spacing:0.15px;text-align:right;">6 326</div><div class="a" style="right:504.70px;top:401.70px;font-size:13px;line-height:13px;color:#353535;font-weight:400;letter-spacing:0.15px;text-align:right;">972</div><div class="a" style="right:392.30px;top:401.70px;font-size:13px;line-height:13px;color:#353535;font-weight:400;letter-spacing:0.15px;text-align:right;">979</div><div class="a" style="right:279.70px;top:401.70px;font-size:13px;line-height:13px;color:#353535;font-weight:400;letter-spacing:0.15px;text-align:right;">1 003</div><div class="a" style="right:154.70px;top:401.70px;font-size:13px;line-height:13px;color:#353535;font-weight:400;letter-spacing:0.15px;text-align:right;">24%</div><div class="a" style="right:63.70px;top:401.70px;font-size:13px;line-height:13px;color:#353535;font-weight:400;letter-spacing:0.15px;text-align:right;">234</div><div class="a" style="left:236.00px;top:417.75px;width:1316.00px;height:20.75px;background:#ececec"></div><div class="a" style="left:402.00px;top:417.75px;width:1.00px;height:20.75px;background:#f2f2f2"></div><div class="a" style="left:492.00px;top:417.75px;width:1.00px;height:20.75px;background:#f2f2f2"></div><div class="a" style="left:536.00px;top:417.75px;width:1.00px;height:20.75px;background:#f2f2f2"></div><div class="a" style="left:610.00px;top:417.75px;width:1.00px;height:20.75px;background:#f2f2f2"></div><div class="a" style="left:649.00px;top:417.75px;width:1.00px;height:20.75px;background:#f2f2f2"></div><div class="a" style="left:728.50px;top:417.75px;width:1.00px;height:20.75px;background:#f2f2f2"></div><div class="a" style="left:790.50px;top:417.75px;width:1.00px;height:20.75px;background:#f2f2f2"></div><div class="a" style="left:862.00px;top:417.75px;width:1.00px;height:20.75px;background:#f2f2f2"></div><div class="a" style="left:977.00px;top:417.75px;width:1.00px;height:20.75px;background:#f2f2f2"></div><div class="a" style="left:1100.50px;top:417.75px;width:1.00px;height:20.75px;background:#f2f2f2"></div><div class="a" style="left:1212.50px;top:417.75px;width:1.00px;height:20.75px;background:#f2f2f2"></div><div class="a" style="left:1324.50px;top:417.75px;width:1.00px;height:20.75px;background:#f2f2f2"></div><div class="a" style="left:1448.50px;top:417.75px;width:1.00px;height:20.75px;background:#f2f2f2"></div><div class="a" style="left:1540.50px;top:417.75px;width:1.00px;height:20.75px;background:#f2f2f2"></div><svg class="a" style="left:243.00px;top:423.00px;" width="9" height="9" viewBox="0 0 9 9" fill="none"><rect x="0.5" y="0.5" width="8" height="8" rx="1.3" stroke="#c0c0c0" stroke-width="1" fill="none"/><rect x="2" y="4" width="5" height="1" fill="#9a9a9a"/><rect x="4" y="2" width="1" height="5" fill="#9a9a9a"/></svg><div class="a" style="left:260.20px;top:422.45px;font-size:13px;line-height:13px;color:#353535;font-weight:400;letter-spacing:0.42px;">2023-04</div><div class="a" style="right:1203.40px;top:422.45px;font-size:13px;line-height:13px;color:#353535;font-weight:400;letter-spacing:0.15px;text-align:right;">3 064 838</div><div class="a" style="right:1113.10px;top:422.45px;font-size:13px;line-height:13px;color:#353535;font-weight:400;letter-spacing:0.15px;text-align:right;">20 455 694</div><div class="a" style="right:1069.70px;top:422.45px;font-size:13px;line-height:13px;color:#353535;font-weight:400;letter-spacing:0.15px;text-align:right;">0,4%</div><div class="a" style="right:995.30px;top:422.45px;font-size:13px;line-height:13px;color:#353535;font-weight:400;letter-spacing:0.15px;text-align:right;">75 374</div><div class="a" style="right:955.90px;top:422.45px;font-size:13px;line-height:13px;color:#353535;font-weight:400;letter-spacing:0.15px;text-align:right;">40,7</div><div class="a" style="right:874.90px;top:422.45px;font-size:13px;line-height:13px;color:#353535;font-weight:400;letter-spacing:0.15px;text-align:right;">9,77%</div><div class="a" style="right:814.10px;top:422.45px;font-size:13px;line-height:13px;color:#353535;font-weight:400;letter-spacing:0.15px;text-align:right;">7 361</div><div class="a" style="right:742.60px;top:422.45px;font-size:13px;line-height:13px;color:#353535;font-weight:400;letter-spacing:0.15px;text-align:right;">416</div><div class="a" style="right:627.30px;top:422.45px;font-size:13px;line-height:13px;color:#353535;font-weight:400;letter-spacing:0.15px;text-align:right;">5 511</div><div class="a" style="right:504.70px;top:422.45px;font-size:13px;line-height:13px;color:#353535;font-weight:400;letter-spacing:0.15px;text-align:right;">1 187</div><div class="a" style="right:392.30px;top:422.45px;font-size:13px;line-height:13px;color:#353535;font-weight:400;letter-spacing:0.15px;text-align:right;">1146</div><div class="a" style="right:279.70px;top:422.45px;font-size:13px;line-height:13px;color:#353535;font-weight:400;letter-spacing:0.15px;text-align:right;">1 232</div><div class="a" style="right:154.70px;top:422.45px;font-size:13px;line-height:13px;color:#353535;font-weight:400;letter-spacing:0.15px;text-align:right;">19%</div><div class="a" style="right:63.70px;top:422.45px;font-size:13px;line-height:13px;color:#353535;font-weight:400;letter-spacing:0.15px;text-align:right;">218</div><svg class="a" style="left:243.00px;top:444.00px;" width="9" height="9" viewBox="0 0 9 9" fill="none"><rect x="0.5" y="0.5" width="8" height="8" rx="1.3" stroke="#c0c0c0" stroke-width="1" fill="none"/><rect x="2" y="4" width="5" height="1" fill="#9a9a9a"/><rect x="4" y="2" width="1" height="5" fill="#9a9a9a"/></svg><div class="a" style="left:260.20px;top:443.20px;font-size:13px;line-height:13px;color:#353535;font-weight:400;letter-spacing:0.42px;">2023-05</div><div class="a" style="right:1203.40px;top:443.20px;font-size:13px;line-height:13px;color:#353535;font-weight:400;letter-spacing:0.15px;text-align:right;">3 864 869</div><div class="a" style="right:1113.10px;top:443.20px;font-size:13px;line-height:13px;color:#353535;font-weight:400;letter-spacing:0.15px;text-align:right;">13 642 801</div><div class="a" style="right:1069.70px;top:443.20px;font-size:13px;line-height:13px;color:#353535;font-weight:400;letter-spacing:0.15px;text-align:right;">0,7%</div><div class="a" style="right:995.30px;top:443.20px;font-size:13px;line-height:13px;color:#353535;font-weight:400;letter-spacing:0.15px;text-align:right;">99 220</div><div class="a" style="right:955.90px;top:443.20px;font-size:13px;line-height:13px;color:#353535;font-weight:400;letter-spacing:0.15px;text-align:right;">39,0</div><div class="a" style="right:874.90px;top:443.20px;font-size:13px;line-height:13px;color:#353535;font-weight:400;letter-spacing:0.15px;text-align:right;">9,53%</div><div class="a" style="right:814.10px;top:443.20px;font-size:13px;line-height:13px;color:#353535;font-weight:400;letter-spacing:0.15px;text-align:right;">9 455</div><div class="a" style="right:742.60px;top:443.20px;font-size:13px;line-height:13px;color:#353535;font-weight:400;letter-spacing:0.15px;text-align:right;">409</div><div class="a" style="right:627.30px;top:443.20px;font-size:13px;line-height:13px;color:#353535;font-weight:400;letter-spacing:0.15px;text-align:right;">5 917</div><div class="a" style="right:504.70px;top:443.20px;font-size:13px;line-height:13px;color:#353535;font-weight:400;letter-spacing:0.15px;text-align:right;">2 899</div><div class="a" style="right:392.30px;top:443.20px;font-size:13px;line-height:13px;color:#353535;font-weight:400;letter-spacing:0.15px;text-align:right;">1455</div><div class="a" style="right:279.70px;top:443.20px;font-size:13px;line-height:13px;color:#353535;font-weight:400;letter-spacing:0.15px;text-align:right;">1 578</div><div class="a" style="right:154.70px;top:443.20px;font-size:13px;line-height:13px;color:#353535;font-weight:400;letter-spacing:0.15px;text-align:right;">15%</div><div class="a" style="right:63.70px;top:443.20px;font-size:13px;line-height:13px;color:#353535;font-weight:400;letter-spacing:0.15px;text-align:right;">224</div><div class="a" style="left:236.00px;top:459.25px;width:1316.00px;height:20.75px;background:#ececec"></div><div class="a" style="left:402.00px;top:459.25px;width:1.00px;height:20.75px;background:#f2f2f2"></div><div class="a" style="left:492.00px;top:459.25px;width:1.00px;height:20.75px;background:#f2f2f2"></div><div class="a" style="left:536.00px;top:459.25px;width:1.00px;height:20.75px;background:#f2f2f2"></div><div class="a" style="left:610.00px;top:459.25px;width:1.00px;height:20.75px;background:#f2f2f2"></div><div class="a" style="left:649.00px;top:459.25px;width:1.00px;height:20.75px;background:#f2f2f2"></div><div class="a" style="left:728.50px;top:459.25px;width:1.00px;height:20.75px;background:#f2f2f2"></div><div class="a" style="left:790.50px;top:459.25px;width:1.00px;height:20.75px;background:#f2f2f2"></div><div class="a" style="left:862.00px;top:459.25px;width:1.00px;height:20.75px;background:#f2f2f2"></div><div class="a" style="left:977.00px;top:459.25px;width:1.00px;height:20.75px;background:#f2f2f2"></div><div class="a" style="left:1100.50px;top:459.25px;width:1.00px;height:20.75px;background:#f2f2f2"></div><div class="a" style="left:1212.50px;top:459.25px;width:1.00px;height:20.75px;background:#f2f2f2"></div><div class="a" style="left:1324.50px;top:459.25px;width:1.00px;height:20.75px;background:#f2f2f2"></div><div class="a" style="left:1448.50px;top:459.25px;width:1.00px;height:20.75px;background:#f2f2f2"></div><div class="a" style="left:1540.50px;top:459.25px;width:1.00px;height:20.75px;background:#f2f2f2"></div><svg class="a" style="left:243.00px;top:465.00px;" width="9" height="9" viewBox="0 0 9 9" fill="none"><rect x="0.5" y="0.5" width="8" height="8" rx="1.3" stroke="#c0c0c0" stroke-width="1" fill="none"/><rect x="2" y="4" width="5" height="1" fill="#9a9a9a"/><rect x="4" y="2" width="1" height="5" fill="#9a9a9a"/></svg><div class="a" style="left:260.20px;top:463.95px;font-size:13px;line-height:13px;color:#353535;font-weight:400;letter-spacing:0.42px;">2023-06</div><div class="a" style="right:1203.40px;top:463.95px;font-size:13px;line-height:13px;color:#353535;font-weight:400;letter-spacing:0.15px;text-align:right;">2 995 319</div><div class="a" style="right:1113.10px;top:463.95px;font-size:13px;line-height:13px;color:#353535;font-weight:400;letter-spacing:0.15px;text-align:right;">5 422 878</div><div class="a" style="right:1069.70px;top:463.95px;font-size:13px;line-height:13px;color:#353535;font-weight:400;letter-spacing:0.15px;text-align:right;">1,1%</div><div class="a" style="right:995.30px;top:463.95px;font-size:13px;line-height:13px;color:#353535;font-weight:400;letter-spacing:0.15px;text-align:right;">61 381</div><div class="a" style="right:955.90px;top:463.95px;font-size:13px;line-height:13px;color:#353535;font-weight:400;letter-spacing:0.15px;text-align:right;">48,8</div><div class="a" style="right:874.90px;top:463.95px;font-size:13px;line-height:13px;color:#353535;font-weight:400;letter-spacing:0.15px;text-align:right;">11,69%</div><div class="a" style="right:814.10px;top:463.95px;font-size:13px;line-height:13px;color:#353535;font-weight:400;letter-spacing:0.15px;text-align:right;">7 176</div><div class="a" style="right:742.60px;top:463.95px;font-size:13px;line-height:13px;color:#353535;font-weight:400;letter-spacing:0.15px;text-align:right;">417</div><div class="a" style="right:627.30px;top:463.95px;font-size:13px;line-height:13px;color:#353535;font-weight:400;letter-spacing:0.15px;text-align:right;">5 293</div><div class="a" style="right:504.70px;top:463.95px;font-size:13px;line-height:13px;color:#353535;font-weight:400;letter-spacing:0.15px;text-align:right;">1 375</div><div class="a" style="right:392.30px;top:463.95px;font-size:13px;line-height:13px;color:#353535;font-weight:400;letter-spacing:0.15px;text-align:right;">1562</div><div class="a" style="right:279.70px;top:463.95px;font-size:13px;line-height:13px;color:#353535;font-weight:400;letter-spacing:0.15px;text-align:right;">1 517</div><div class="a" style="right:154.70px;top:463.95px;font-size:13px;line-height:13px;color:#353535;font-weight:400;letter-spacing:0.15px;text-align:right;">12%</div><div class="a" style="right:63.70px;top:463.95px;font-size:13px;line-height:13px;color:#353535;font-weight:400;letter-spacing:0.15px;text-align:right;">188</div><svg class="a" style="left:243.00px;top:486.00px;" width="9" height="9" viewBox="0 0 9 9" fill="none"><rect x="0.5" y="0.5" width="8" height="8" rx="1.3" stroke="#c0c0c0" stroke-width="1" fill="none"/><rect x="2" y="4" width="5" height="1" fill="#9a9a9a"/><rect x="4" y="2" width="1" height="5" fill="#9a9a9a"/></svg><div class="a" style="left:260.20px;top:484.70px;font-size:13px;line-height:13px;color:#353535;font-weight:400;letter-spacing:0.42px;">2023-07</div><div class="a" style="right:1203.40px;top:484.70px;font-size:13px;line-height:13px;color:#353535;font-weight:400;letter-spacing:0.15px;text-align:right;">3 394 870</div><div class="a" style="right:1113.10px;top:484.70px;font-size:13px;line-height:13px;color:#353535;font-weight:400;letter-spacing:0.15px;text-align:right;">8 322 668</div><div class="a" style="right:1069.70px;top:484.70px;font-size:13px;line-height:13px;color:#353535;font-weight:400;letter-spacing:0.15px;text-align:right;">0,9%</div><div class="a" style="right:995.30px;top:484.70px;font-size:13px;line-height:13px;color:#353535;font-weight:400;letter-spacing:0.15px;text-align:right;">77 013</div><div class="a" style="right:955.90px;top:484.70px;font-size:13px;line-height:13px;color:#353535;font-weight:400;letter-spacing:0.15px;text-align:right;">44,1</div><div class="a" style="right:874.90px;top:484.70px;font-size:13px;line-height:13px;color:#353535;font-weight:400;letter-spacing:0.15px;text-align:right;">12,05%</div><div class="a" style="right:814.10px;top:484.70px;font-size:13px;line-height:13px;color:#353535;font-weight:400;letter-spacing:0.15px;text-align:right;">9 278</div><div class="a" style="right:742.60px;top:484.70px;font-size:13px;line-height:13px;color:#353535;font-weight:400;letter-spacing:0.15px;text-align:right;">366</div><div class="a" style="right:627.30px;top:484.70px;font-size:13px;line-height:13px;color:#353535;font-weight:400;letter-spacing:0.15px;text-align:right;">6 875</div><div class="a" style="right:504.70px;top:484.70px;font-size:13px;line-height:13px;color:#353535;font-weight:400;letter-spacing:0.15px;text-align:right;">1 202</div><div class="a" style="right:392.30px;top:484.70px;font-size:13px;line-height:13px;color:#353535;font-weight:400;letter-spacing:0.15px;text-align:right;">1234</div><div class="a" style="right:279.70px;top:484.70px;font-size:13px;line-height:13px;color:#353535;font-weight:400;letter-spacing:0.15px;text-align:right;">1 272</div><div class="a" style="right:154.70px;top:484.70px;font-size:13px;line-height:13px;color:#353535;font-weight:400;letter-spacing:0.15px;text-align:right;">14%</div><div class="a" style="right:63.70px;top:484.70px;font-size:13px;line-height:13px;color:#353535;font-weight:400;letter-spacing:0.15px;text-align:right;">169</div><div class="a" style="left:236.00px;top:500.75px;width:1316.00px;height:20.75px;background:#ececec"></div><div class="a" style="left:402.00px;top:500.75px;width:1.00px;height:20.75px;background:#f2f2f2"></div><div class="a" style="left:492.00px;top:500.75px;width:1.00px;height:20.75px;background:#f2f2f2"></div><div class="a" style="left:536.00px;top:500.75px;width:1.00px;height:20.75px;background:#f2f2f2"></div><div class="a" style="left:610.00px;top:500.75px;width:1.00px;height:20.75px;background:#f2f2f2"></div><div class="a" style="left:649.00px;top:500.75px;width:1.00px;height:20.75px;background:#f2f2f2"></div><div class="a" style="left:728.50px;top:500.75px;width:1.00px;height:20.75px;background:#f2f2f2"></div><div class="a" style="left:790.50px;top:500.75px;width:1.00px;height:20.75px;background:#f2f2f2"></div><div class="a" style="left:862.00px;top:500.75px;width:1.00px;height:20.75px;background:#f2f2f2"></div><div class="a" style="left:977.00px;top:500.75px;width:1.00px;height:20.75px;background:#f2f2f2"></div><div class="a" style="left:1100.50px;top:500.75px;width:1.00px;height:20.75px;background:#f2f2f2"></div><div class="a" style="left:1212.50px;top:500.75px;width:1.00px;height:20.75px;background:#f2f2f2"></div><div class="a" style="left:1324.50px;top:500.75px;width:1.00px;height:20.75px;background:#f2f2f2"></div><div class="a" style="left:1448.50px;top:500.75px;width:1.00px;height:20.75px;background:#f2f2f2"></div><div class="a" style="left:1540.50px;top:500.75px;width:1.00px;height:20.75px;background:#f2f2f2"></div><svg class="a" style="left:243.00px;top:506.00px;" width="9" height="9" viewBox="0 0 9 9" fill="none"><rect x="0.5" y="0.5" width="8" height="8" rx="1.3" stroke="#c0c0c0" stroke-width="1" fill="none"/><rect x="2" y="4" width="5" height="1" fill="#9a9a9a"/><rect x="4" y="2" width="1" height="5" fill="#9a9a9a"/></svg><div class="a" style="left:260.20px;top:505.45px;font-size:13px;line-height:13px;color:#353535;font-weight:400;letter-spacing:0.42px;">2023-08</div><div class="a" style="right:1203.40px;top:505.45px;font-size:13px;line-height:13px;color:#353535;font-weight:400;letter-spacing:0.15px;text-align:right;">1 375 446</div><div class="a" style="right:1113.10px;top:505.45px;font-size:13px;line-height:13px;color:#353535;font-weight:400;letter-spacing:0.15px;text-align:right;">12 556 994</div><div class="a" style="right:1069.70px;top:505.45px;font-size:13px;line-height:13px;color:#353535;font-weight:400;letter-spacing:0.15px;text-align:right;">2,1%</div><div class="a" style="right:995.30px;top:505.45px;font-size:13px;line-height:13px;color:#353535;font-weight:400;letter-spacing:0.15px;text-align:right;">265 678</div><div class="a" style="right:955.90px;top:505.45px;font-size:13px;line-height:13px;color:#353535;font-weight:400;letter-spacing:0.15px;text-align:right;">5,2</div><div class="a" style="right:874.90px;top:505.45px;font-size:13px;line-height:13px;color:#353535;font-weight:400;letter-spacing:0.15px;text-align:right;">3,61%</div><div class="a" style="right:814.10px;top:505.45px;font-size:13px;line-height:13px;color:#353535;font-weight:400;letter-spacing:0.15px;text-align:right;">9 585</div><div class="a" style="right:742.60px;top:505.45px;font-size:13px;line-height:13px;color:#353535;font-weight:400;letter-spacing:0.15px;text-align:right;">143</div><div class="a" style="right:627.30px;top:505.45px;font-size:13px;line-height:13px;color:#353535;font-weight:400;letter-spacing:0.15px;text-align:right;">7 261</div><div class="a" style="right:504.70px;top:505.45px;font-size:13px;line-height:13px;color:#353535;font-weight:400;letter-spacing:0.15px;text-align:right;">2 057</div><div class="a" style="right:392.30px;top:505.45px;font-size:13px;line-height:13px;color:#353535;font-weight:400;letter-spacing:0.15px;text-align:right;">2126</div><div class="a" style="right:279.70px;top:505.45px;font-size:13px;line-height:13px;color:#353535;font-weight:400;letter-spacing:0.15px;text-align:right;">2 101</div><div class="a" style="right:154.70px;top:505.45px;font-size:13px;line-height:13px;color:#353535;font-weight:400;letter-spacing:0.15px;text-align:right;">22%</div><div class="a" style="right:63.70px;top:505.45px;font-size:13px;line-height:13px;color:#353535;font-weight:400;letter-spacing:0.15px;text-align:right;">466</div><svg class="a" style="left:243.00px;top:527.00px;" width="9" height="9" viewBox="0 0 9 9" fill="none"><rect x="0.5" y="0.5" width="8" height="8" rx="1.3" stroke="#c0c0c0" stroke-width="1" fill="none"/><rect x="2" y="4" width="5" height="1" fill="#9a9a9a"/><rect x="4" y="2" width="1" height="5" fill="#9a9a9a"/></svg><div class="a" style="left:260.20px;top:526.20px;font-size:13px;line-height:13px;color:#353535;font-weight:400;letter-spacing:0.42px;">2023-09</div><div class="a" style="right:1203.40px;top:526.20px;font-size:13px;line-height:13px;color:#353535;font-weight:400;letter-spacing:0.15px;text-align:right;">1 686 256</div><div class="a" style="right:1113.10px;top:526.20px;font-size:13px;line-height:13px;color:#353535;font-weight:400;letter-spacing:0.15px;text-align:right;">11 102 383</div><div class="a" style="right:1069.70px;top:526.20px;font-size:13px;line-height:13px;color:#353535;font-weight:400;letter-spacing:0.15px;text-align:right;">1,8%</div><div class="a" style="right:995.30px;top:526.20px;font-size:13px;line-height:13px;color:#353535;font-weight:400;letter-spacing:0.15px;text-align:right;">197 217</div><div class="a" style="right:955.90px;top:526.20px;font-size:13px;line-height:13px;color:#353535;font-weight:400;letter-spacing:0.15px;text-align:right;">8,6</div><div class="a" style="right:874.90px;top:526.20px;font-size:13px;line-height:13px;color:#353535;font-weight:400;letter-spacing:0.15px;text-align:right;">3,84%</div><div class="a" style="right:814.10px;top:526.20px;font-size:13px;line-height:13px;color:#353535;font-weight:400;letter-spacing:0.15px;text-align:right;">7 582</div><div class="a" style="right:742.60px;top:526.20px;font-size:13px;line-height:13px;color:#353535;font-weight:400;letter-spacing:0.15px;text-align:right;">222</div><div class="a" style="right:627.30px;top:526.20px;font-size:13px;line-height:13px;color:#353535;font-weight:400;letter-spacing:0.15px;text-align:right;">5 489</div><div class="a" style="right:504.70px;top:526.20px;font-size:13px;line-height:13px;color:#353535;font-weight:400;letter-spacing:0.15px;text-align:right;">1 851</div><div class="a" style="right:392.30px;top:526.20px;font-size:13px;line-height:13px;color:#353535;font-weight:400;letter-spacing:0.15px;text-align:right;">1948</div><div class="a" style="right:279.70px;top:526.20px;font-size:13px;line-height:13px;color:#353535;font-weight:400;letter-spacing:0.15px;text-align:right;">1 941</div><div class="a" style="right:154.70px;top:526.20px;font-size:13px;line-height:13px;color:#353535;font-weight:400;letter-spacing:0.15px;text-align:right;">24%</div><div class="a" style="right:63.70px;top:526.20px;font-size:13px;line-height:13px;color:#353535;font-weight:400;letter-spacing:0.15px;text-align:right;">462</div><div class="a" style="left:236.00px;top:542.25px;width:1316.00px;height:20.75px;background:#ececec"></div><div class="a" style="left:402.00px;top:542.25px;width:1.00px;height:20.75px;background:#f2f2f2"></div><div class="a" style="left:492.00px;top:542.25px;width:1.00px;height:20.75px;background:#f2f2f2"></div><div class="a" style="left:536.00px;top:542.25px;width:1.00px;height:20.75px;background:#f2f2f2"></div><div class="a" style="left:610.00px;top:542.25px;width:1.00px;height:20.75px;background:#f2f2f2"></div><div class="a" style="left:649.00px;top:542.25px;width:1.00px;height:20.75px;background:#f2f2f2"></div><div class="a" style="left:728.50px;top:542.25px;width:1.00px;height:20.75px;background:#f2f2f2"></div><div class="a" style="left:790.50px;top:542.25px;width:1.00px;height:20.75px;background:#f2f2f2"></div><div class="a" style="left:862.00px;top:542.25px;width:1.00px;height:20.75px;background:#f2f2f2"></div><div class="a" style="left:977.00px;top:542.25px;width:1.00px;height:20.75px;background:#f2f2f2"></div><div class="a" style="left:1100.50px;top:542.25px;width:1.00px;height:20.75px;background:#f2f2f2"></div><div class="a" style="left:1212.50px;top:542.25px;width:1.00px;height:20.75px;background:#f2f2f2"></div><div class="a" style="left:1324.50px;top:542.25px;width:1.00px;height:20.75px;background:#f2f2f2"></div><div class="a" style="left:1448.50px;top:542.25px;width:1.00px;height:20.75px;background:#f2f2f2"></div><div class="a" style="left:1540.50px;top:542.25px;width:1.00px;height:20.75px;background:#f2f2f2"></div><svg class="a" style="left:243.00px;top:548.00px;" width="9" height="9" viewBox="0 0 9 9" fill="none"><rect x="0.5" y="0.5" width="8" height="8" rx="1.3" stroke="#c0c0c0" stroke-width="1" fill="none"/><rect x="2" y="4" width="5" height="1" fill="#9a9a9a"/><rect x="4" y="2" width="1" height="5" fill="#9a9a9a"/></svg><div class="a" style="left:260.20px;top:546.95px;font-size:13px;line-height:13px;color:#353535;font-weight:400;letter-spacing:0.42px;">2023-10</div><div class="a" style="right:1203.40px;top:546.95px;font-size:13px;line-height:13px;color:#353535;font-weight:400;letter-spacing:0.15px;text-align:right;">5 084 051</div><div class="a" style="right:1113.10px;top:546.95px;font-size:13px;line-height:13px;color:#353535;font-weight:400;letter-spacing:0.15px;text-align:right;">15 722 015</div><div class="a" style="right:1069.70px;top:546.95px;font-size:13px;line-height:13px;color:#353535;font-weight:400;letter-spacing:0.15px;text-align:right;">1,3%</div><div class="a" style="right:995.30px;top:546.95px;font-size:13px;line-height:13px;color:#353535;font-weight:400;letter-spacing:0.15px;text-align:right;">202 688</div><div class="a" style="right:955.90px;top:546.95px;font-size:13px;line-height:13px;color:#353535;font-weight:400;letter-spacing:0.15px;text-align:right;">25,1</div><div class="a" style="right:874.90px;top:546.95px;font-size:13px;line-height:13px;color:#353535;font-weight:400;letter-spacing:0.15px;text-align:right;">3,88%</div><div class="a" style="right:814.10px;top:546.95px;font-size:13px;line-height:13px;color:#353535;font-weight:400;letter-spacing:0.15px;text-align:right;">7 866</div><div class="a" style="right:742.60px;top:546.95px;font-size:13px;line-height:13px;color:#353535;font-weight:400;letter-spacing:0.15px;text-align:right;">646</div><div class="a" style="right:627.30px;top:546.95px;font-size:13px;line-height:13px;color:#353535;font-weight:400;letter-spacing:0.15px;text-align:right;">5 284</div><div class="a" style="right:504.70px;top:546.95px;font-size:13px;line-height:13px;color:#353535;font-weight:400;letter-spacing:0.15px;text-align:right;">2 343</div><div class="a" style="right:392.30px;top:546.95px;font-size:13px;line-height:13px;color:#353535;font-weight:400;letter-spacing:0.15px;text-align:right;">3009</div><div class="a" style="right:279.70px;top:546.95px;font-size:13px;line-height:13px;color:#353535;font-weight:400;letter-spacing:0.15px;text-align:right;">2 792</div><div class="a" style="right:154.70px;top:546.95px;font-size:13px;line-height:13px;color:#353535;font-weight:400;letter-spacing:0.15px;text-align:right;">17%</div><div class="a" style="right:63.70px;top:546.95px;font-size:13px;line-height:13px;color:#353535;font-weight:400;letter-spacing:0.15px;text-align:right;">516</div><svg class="a" style="left:243.00px;top:569.00px;" width="9" height="9" viewBox="0 0 9 9" fill="none"><rect x="0.5" y="0.5" width="8" height="8" rx="1.3" stroke="#c0c0c0" stroke-width="1" fill="none"/><rect x="2" y="4" width="5" height="1" fill="#9a9a9a"/><rect x="4" y="2" width="1" height="5" fill="#9a9a9a"/></svg><div class="a" style="left:260.20px;top:567.70px;font-size:13px;line-height:13px;color:#353535;font-weight:400;letter-spacing:0.42px;">2023-11</div><div class="a" style="right:1203.40px;top:567.70px;font-size:13px;line-height:13px;color:#353535;font-weight:400;letter-spacing:0.15px;text-align:right;">4 303 458</div><div class="a" style="right:1113.10px;top:567.70px;font-size:13px;line-height:13px;color:#353535;font-weight:400;letter-spacing:0.15px;text-align:right;">15 753 779</div><div class="a" style="right:1069.70px;top:567.70px;font-size:13px;line-height:13px;color:#353535;font-weight:400;letter-spacing:0.15px;text-align:right;">0,8%</div><div class="a" style="right:995.30px;top:567.70px;font-size:13px;line-height:13px;color:#353535;font-weight:400;letter-spacing:0.15px;text-align:right;">127 002</div><div class="a" style="right:955.90px;top:567.70px;font-size:13px;line-height:13px;color:#353535;font-weight:400;letter-spacing:0.15px;text-align:right;">33,9</div><div class="a" style="right:874.90px;top:567.70px;font-size:13px;line-height:13px;color:#353535;font-weight:400;letter-spacing:0.15px;text-align:right;">5,02%</div><div class="a" style="right:814.10px;top:567.70px;font-size:13px;line-height:13px;color:#353535;font-weight:400;letter-spacing:0.15px;text-align:right;">6 381</div><div class="a" style="right:742.60px;top:567.70px;font-size:13px;line-height:13px;color:#353535;font-weight:400;letter-spacing:0.15px;text-align:right;">674</div><div class="a" style="right:627.30px;top:567.70px;font-size:13px;line-height:13px;color:#353535;font-weight:400;letter-spacing:0.15px;text-align:right;">3 900</div><div class="a" style="right:504.70px;top:567.70px;font-size:13px;line-height:13px;color:#353535;font-weight:400;letter-spacing:0.15px;text-align:right;">2 207</div><div class="a" style="right:392.30px;top:567.70px;font-size:13px;line-height:13px;color:#353535;font-weight:400;letter-spacing:0.15px;text-align:right;">2902</div><div class="a" style="right:279.70px;top:567.70px;font-size:13px;line-height:13px;color:#353535;font-weight:400;letter-spacing:0.15px;text-align:right;">2 885</div><div class="a" style="right:154.70px;top:567.70px;font-size:13px;line-height:13px;color:#353535;font-weight:400;letter-spacing:0.15px;text-align:right;">20%</div><div class="a" style="right:63.70px;top:567.70px;font-size:13px;line-height:13px;color:#353535;font-weight:400;letter-spacing:0.15px;text-align:right;">586</div><div class="a" style="left:236.00px;top:583.75px;width:1316.00px;height:20.75px;background:#ececec"></div><div class="a" style="left:402.00px;top:583.75px;width:1.00px;height:20.75px;background:#f2f2f2"></div><div class="a" style="left:492.00px;top:583.75px;width:1.00px;height:20.75px;background:#f2f2f2"></div><div class="a" style="left:536.00px;top:583.75px;width:1.00px;height:20.75px;background:#f2f2f2"></div><div class="a" style="left:610.00px;top:583.75px;width:1.00px;height:20.75px;background:#f2f2f2"></div><div class="a" style="left:649.00px;top:583.75px;width:1.00px;height:20.75px;background:#f2f2f2"></div><div class="a" style="left:728.50px;top:583.75px;width:1.00px;height:20.75px;background:#f2f2f2"></div><div class="a" style="left:790.50px;top:583.75px;width:1.00px;height:20.75px;background:#f2f2f2"></div><div class="a" style="left:862.00px;top:583.75px;width:1.00px;height:20.75px;background:#f2f2f2"></div><div class="a" style="left:977.00px;top:583.75px;width:1.00px;height:20.75px;background:#f2f2f2"></div><div class="a" style="left:1100.50px;top:583.75px;width:1.00px;height:20.75px;background:#f2f2f2"></div><div class="a" style="left:1212.50px;top:583.75px;width:1.00px;height:20.75px;background:#f2f2f2"></div><div class="a" style="left:1324.50px;top:583.75px;width:1.00px;height:20.75px;background:#f2f2f2"></div><div class="a" style="left:1448.50px;top:583.75px;width:1.00px;height:20.75px;background:#f2f2f2"></div><div class="a" style="left:1540.50px;top:583.75px;width:1.00px;height:20.75px;background:#f2f2f2"></div><svg class="a" style="left:243.00px;top:589.00px;" width="9" height="9" viewBox="0 0 9 9" fill="none"><rect x="0.5" y="0.5" width="8" height="8" rx="1.3" stroke="#c0c0c0" stroke-width="1" fill="none"/><rect x="2" y="4" width="5" height="1" fill="#9a9a9a"/><rect x="4" y="2" width="1" height="5" fill="#9a9a9a"/></svg><div class="a" style="left:260.20px;top:588.45px;font-size:13px;line-height:13px;color:#353535;font-weight:400;letter-spacing:0.42px;">2023-12</div><div class="a" style="right:1203.40px;top:588.45px;font-size:13px;line-height:13px;color:#353535;font-weight:400;letter-spacing:0.15px;text-align:right;">3 489 822</div><div class="a" style="right:1113.10px;top:588.45px;font-size:13px;line-height:13px;color:#353535;font-weight:400;letter-spacing:0.15px;text-align:right;">14 955 383</div><div class="a" style="right:1069.70px;top:588.45px;font-size:13px;line-height:13px;color:#353535;font-weight:400;letter-spacing:0.15px;text-align:right;">0,8%</div><div class="a" style="right:995.30px;top:588.45px;font-size:13px;line-height:13px;color:#353535;font-weight:400;letter-spacing:0.15px;text-align:right;">112 282</div><div class="a" style="right:955.90px;top:588.45px;font-size:13px;line-height:13px;color:#353535;font-weight:400;letter-spacing:0.15px;text-align:right;">31,1</div><div class="a" style="right:874.90px;top:588.45px;font-size:13px;line-height:13px;color:#353535;font-weight:400;letter-spacing:0.15px;text-align:right;">4,84%</div><div class="a" style="right:814.10px;top:588.45px;font-size:13px;line-height:13px;color:#353535;font-weight:400;letter-spacing:0.15px;text-align:right;">5 429</div><div class="a" style="right:742.60px;top:588.45px;font-size:13px;line-height:13px;color:#353535;font-weight:400;letter-spacing:0.15px;text-align:right;">643</div><div class="a" style="right:627.30px;top:588.45px;font-size:13px;line-height:13px;color:#353535;font-weight:400;letter-spacing:0.15px;text-align:right;">2 690</div><div class="a" style="right:504.70px;top:588.45px;font-size:13px;line-height:13px;color:#353535;font-weight:400;letter-spacing:0.15px;text-align:right;">2 219</div><div class="a" style="right:392.30px;top:588.45px;font-size:13px;line-height:13px;color:#353535;font-weight:400;letter-spacing:0.15px;text-align:right;">2447</div><div class="a" style="right:279.70px;top:588.45px;font-size:13px;line-height:13px;color:#353535;font-weight:400;letter-spacing:0.15px;text-align:right;">2 304</div><div class="a" style="right:154.70px;top:588.45px;font-size:13px;line-height:13px;color:#353535;font-weight:400;letter-spacing:0.15px;text-align:right;">20%</div><div class="a" style="right:63.70px;top:588.45px;font-size:13px;line-height:13px;color:#353535;font-weight:400;letter-spacing:0.15px;text-align:right;">489</div><div class="a" style="left:260.60px;top:609.20px;font-size:13px;line-height:13px;color:#1a1a1a;font-weight:700;letter-spacing:0.35px;">Всего</div><div class="a" style="right:1202.90px;top:609.20px;font-size:13px;line-height:13px;color:#1a1a1a;font-weight:700;letter-spacing:0.45px;text-align:right;">38 331 083</div><div class="a" style="right:1112.60px;top:609.20px;font-size:13px;line-height:13px;color:#1a1a1a;font-weight:700;letter-spacing:0.45px;text-align:right;">206 002 822</div><div class="a" style="right:1069.20px;top:609.20px;font-size:13px;line-height:13px;color:#1a1a1a;font-weight:700;letter-spacing:0.45px;text-align:right;">0,7%</div><div class="a" style="right:994.80px;top:609.20px;font-size:13px;line-height:13px;color:#1a1a1a;font-weight:700;letter-spacing:0.45px;text-align:right;">1 465 449</div><div class="a" style="right:955.40px;top:609.20px;font-size:13px;line-height:13px;color:#1a1a1a;font-weight:700;letter-spacing:0.45px;text-align:right;">26,2</div><div class="a" style="right:874.40px;top:609.20px;font-size:13px;line-height:13px;color:#1a1a1a;font-weight:700;letter-spacing:0.45px;text-align:right;">6,12%</div><div class="a" style="right:813.60px;top:609.20px;font-size:13px;line-height:13px;color:#1a1a1a;font-weight:700;letter-spacing:0.45px;text-align:right;">89 692</div><div class="a" style="right:742.10px;top:609.20px;font-size:13px;line-height:13px;color:#1a1a1a;font-weight:700;letter-spacing:0.45px;text-align:right;">427</div><div class="a" style="right:626.80px;top:609.20px;font-size:13px;line-height:13px;color:#1a1a1a;font-weight:700;letter-spacing:0.45px;text-align:right;">64 005</div><div class="a" style="right:504.20px;top:609.20px;font-size:13px;line-height:13px;color:#1a1a1a;font-weight:700;letter-spacing:0.45px;text-align:right;">19 909</div><div class="a" style="right:391.80px;top:609.20px;font-size:13px;line-height:13px;color:#1a1a1a;font-weight:700;letter-spacing:0.45px;text-align:right;">20345</div><div class="a" style="right:279.20px;top:609.20px;font-size:13px;line-height:13px;color:#1a1a1a;font-weight:700;letter-spacing:0.45px;text-align:right;">20 132</div><div class="a" style="right:154.20px;top:609.20px;font-size:13px;line-height:13px;color:#1a1a1a;font-weight:700;letter-spacing:0.45px;text-align:right;">19%</div><div class="a" style="right:63.20px;top:609.20px;font-size:13px;line-height:13px;color:#1a1a1a;font-weight:700;letter-spacing:0.45px;text-align:right;">3 896</div><div class="a" style="left:318.20px;top:355.00px;width:1.00px;height:269.50px;background:#4aa3f7"></div><div class="a" style="left:237.00px;top:833.00px;width:723.50px;height:7.00px;background:#adadad;border-radius:3.5px"></div><svg class="a" style="left:1570.00px;top:110.00px;" width="30" height="60" viewBox="0 0 30 60" fill="none"><path d="M14.6 7.8 L10.6 12 L14.6 16.2 M17.6 7.8 L13.6 12 L17.6 16.2" stroke="#333" stroke-width="1.2"/><path d="M12.8 43.4 V46.5" stroke="#777" stroke-width="1.1"/><path d="M16.5 42 V48.7" stroke="#222" stroke-width="1.2"/><path d="M19.9 40.2 V50.1" stroke="#666" stroke-width="1.2"/></svg><div class="a" style="left:1593px;top:170.4px;font-size:18px;line-height:18px;font-weight:700;color:#252423;transform-origin:0 0;transform:rotate(90deg);letter-spacing:0.4px">Фильтры</div></body></html>
